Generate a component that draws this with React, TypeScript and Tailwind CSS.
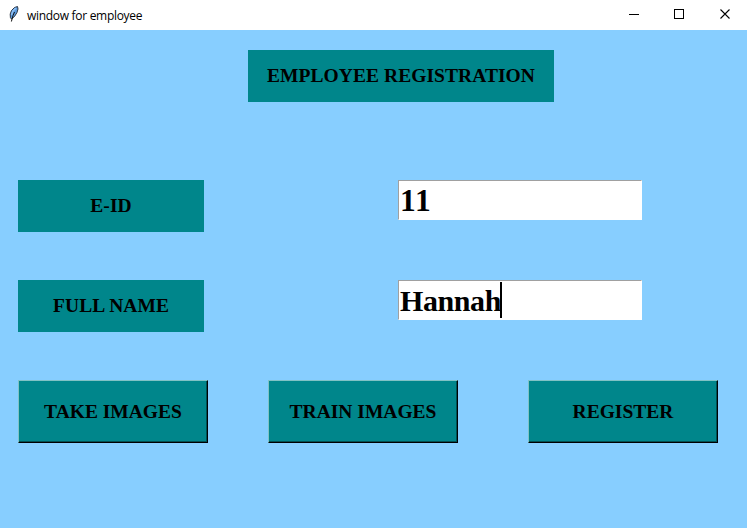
import React from "react";

const serif = "font-['Liberation_Serif',serif] font-bold text-black";

function Label({ children, className }: { children: React.ReactNode; className: string }) {
  return (
    <div className={`flex h-[52px] items-center justify-center whitespace-nowrap bg-[#00868b] text-[19.5px] leading-none tracking-[0.06px] ${serif} ${className}`}>
      {children}
    </div>
  );
}

function Entry({ value, focused = false, className }: { value: string; focused?: boolean; className: string }) {
  return (
    <div className={`flex h-10 w-[244px] items-center border border-b-white border-l-[#a0a0a0] border-r-white border-t-[#a0a0a0] bg-white pl-px leading-none ${serif}`}>
      <span className={className}>{value}</span>
      {focused && <span className="h-9 w-0.5 bg-black" />}
    </div>
  );
}

function PushButton({ children, className }: { children: React.ReactNode; className: string }) {
  return (
    <button className={`flex h-[63px] w-[190px] items-center justify-center whitespace-nowrap border border-b-black border-l-[#80c2c5] border-r-black border-t-[#80c2c5] bg-[#00868b] text-[19.5px] leading-none shadow-[inset_-1px_-1px_0_#005053] ${serif} ${className}`}>
      {children}
    </button>
  );
}

function FeatherIcon() {
  return (
    <svg className="h-4 w-4" viewBox="0 0 16 16" fill="none">
      <path d="M11.5 .5 8.5 1.5 5.5 4.5 4.2 8l.2 3.5 1 1.5L8.5 10.5l2.5-4L12 3Z" fill="#5b9be0" stroke="#1f2733" strokeWidth="0.9" />
      <path d="M10 2 7 5l-1.500 4" stroke="#8fc0f5" strokeWidth="1.4" />
      <path d="M8.500 6 7 9.500l-1.600 6" stroke="#111" strokeWidth="1" />
    </svg>
  );
}

export default function App() {
  return (
    <div className="h-[528px] w-[747px] overflow-hidden bg-[#87ceff]">
      <header className="flex h-[30px] items-center bg-white text-black">
        <div className="-mt-0.5 ml-[6px]"><FeatherIcon /></div>
        <span className="ml-[5px] pt-px font-['Open_Sans',sans-serif] text-[12px] leading-none tracking-[-0.3px]">window for employee</span>
        <div className="ml-auto flex h-[30px]">
          <svg className="h-[30px] w-[138px]" viewBox="0 0 138 30" fill="none" stroke="#000" shapeRendering="crispEdges">
            <path d="M20 14.5h10M65.5 9.5h9v9h-9z" />
            <path d="m111.500 9.500 9 9m0-9-9 9" shapeRendering="auto" strokeWidth="1.1" />
          </svg>
        </div>
      </header>
      <main className="pl-[18px] pt-5">
        <Label className="ml-[230px] w-[306px]">EMPLOYEE REGISTRATION</Label>
        <div className="mt-[78px] flex h-[52px] gap-[194px]">
          <Label className="w-[186px]">E-ID</Label>
          <Entry value="11" className="pt-px text-[31.5px] tracking-[1px]" />
        </div>
        <div className="mt-12 flex h-[52px] gap-[194px]">
          <Label className="w-[186px]">FULL NAME</Label>
          <Entry value="Hannah" focused className="w-[100px] whitespace-nowrap pt-px text-[30px] tracking-[-0.4px]" />
        </div>
        <div className="mt-12 flex">
          <PushButton className="">TAKE IMAGES</PushButton>
          <PushButton className="ml-[60px]">TRAIN IMAGES</PushButton>
          <PushButton className="ml-[70px]">REGISTER</PushButton>
        </div>
      </main>
    </div>
  );
}
